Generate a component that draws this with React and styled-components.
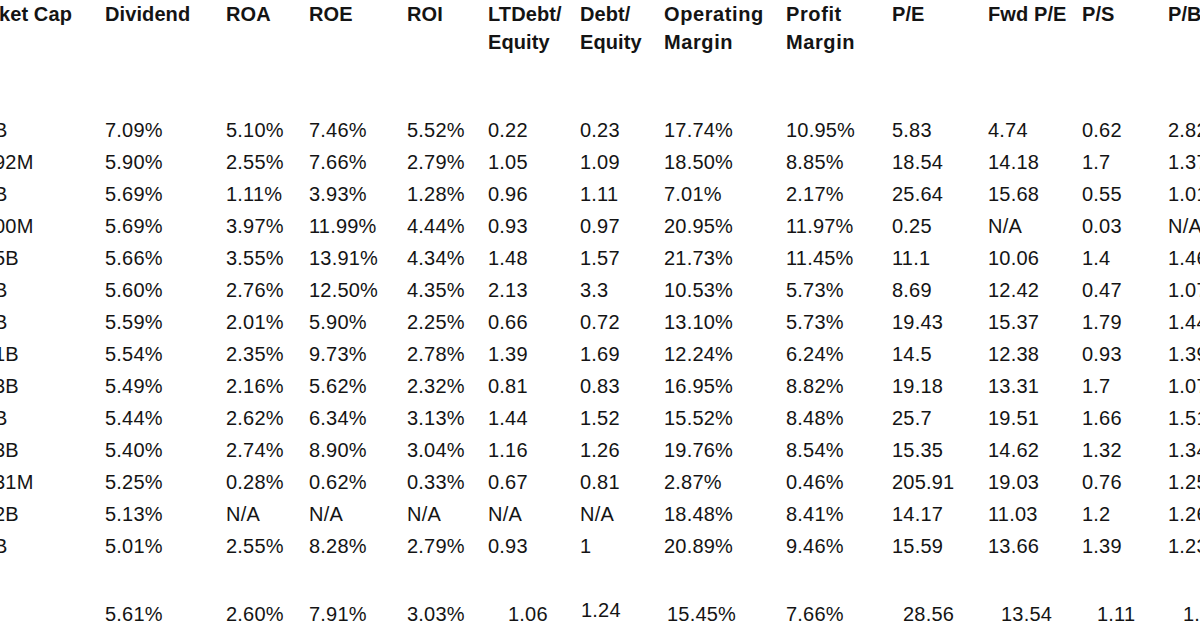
import React from "react";
import styled, { createGlobalStyle } from "styled-components";

const GlobalStyle = createGlobalStyle`
  html, body {
    margin: 0;
    padding: 0;
    background: #ffffff;
  }
  body {
    width: 1200px;
    height: 630px;
    overflow: hidden;
    font-family: "Liberation Sans", Arial, sans-serif;
    color: #141414;
  }
`;

// column starts in the sheet: 0, 105, 226, 309, 407, 488, 580, 664, 786, 892, 988, 1082, 1168
const columns = "105px 121px 83px 98px 81px 92px 84px 122px 106px 96px 94px 86px 120px";

const Sheet = styled.div`
  width: 1200px;
  height: 630px;
  overflow: hidden;
`;

const HeaderRow = styled.div`
  display: grid;
  grid-template-columns: ${columns};
  font-weight: 700;
  font-size: 20px;
  line-height: 28px;
  height: 56px;
  margin-bottom: 58px;
`;

const HeadCell = styled.div`
  white-space: nowrap;
  margin-left: ${(p) => (p.$first ? "-1px" : "0")};
  letter-spacing: ${(p) => (p.$wide ? "0.6px" : "0.1px")};
`;

const Row = styled.div`
  display: grid;
  grid-template-columns: ${columns};
  font-size: 20px;
  line-height: 32px;
  height: 32px;
  margin-top: ${(p) => (p.$gap ? "36px" : "0")};
`;

const Cell = styled.div`
  white-space: nowrap;
  letter-spacing: 0.2px;
  padding-left: ${(p) => p.$shift || 0}px;
  margin-left: ${(p) => (p.$first ? "-6px" : "0")};
  position: relative;
  top: ${(p) => (p.$raise ? "-4px" : "0")};
`;

const headers = [
  ["ket Cap"],
  ["Dividend"],
  ["ROA"],
  ["ROE"],
  ["ROI"],
  ["LTDebt/", "Equity"],
  ["Debt/", "Equity"],
  ["Operating", "Margin"],
  ["Profit", "Margin"],
  ["P/E"],
  ["Fwd P/E"],
  ["P/S"],
  ["P/B"],
];

const rows = [
  ["B", "7.09%", "5.10%", "7.46%", "5.52%", "0.22", "0.23", "17.74%", "10.95%", "5.83", "4.74", "0.62", "2.82"],
  ["92M", "5.90%", "2.55%", "7.66%", "2.79%", "1.05", "1.09", "18.50%", "8.85%", "18.54", "14.18", "1.7", "1.37"],
  ["B", "5.69%", "1.11%", "3.93%", "1.28%", "0.96", "1.11", "7.01%", "2.17%", "25.64", "15.68", "0.55", "1.01"],
  ["00M", "5.69%", "3.97%", "11.99%", "4.44%", "0.93", "0.97", "20.95%", "11.97%", "0.25", "N/A", "0.03", "N/A"],
  ["5B", "5.66%", "3.55%", "13.91%", "4.34%", "1.48", "1.57", "21.73%", "11.45%", "11.1", "10.06", "1.4", "1.46"],
  ["B", "5.60%", "2.76%", "12.50%", "4.35%", "2.13", "3.3", "10.53%", "5.73%", "8.69", "12.42", "0.47", "1.07"],
  ["B", "5.59%", "2.01%", "5.90%", "2.25%", "0.66", "0.72", "13.10%", "5.73%", "19.43", "15.37", "1.79", "1.44"],
  ["1B", "5.54%", "2.35%", "9.73%", "2.78%", "1.39", "1.69", "12.24%", "6.24%", "14.5", "12.38", "0.93", "1.39"],
  ["3B", "5.49%", "2.16%", "5.62%", "2.32%", "0.81", "0.83", "16.95%", "8.82%", "19.18", "13.31", "1.7", "1.07"],
  ["B", "5.44%", "2.62%", "6.34%", "3.13%", "1.44", "1.52", "15.52%", "8.48%", "25.7", "19.51", "1.66", "1.51"],
  ["3B", "5.40%", "2.74%", "8.90%", "3.04%", "1.16", "1.26", "19.76%", "8.54%", "15.35", "14.62", "1.32", "1.34"],
  ["31M", "5.25%", "0.28%", "0.62%", "0.33%", "0.67", "0.81", "2.87%", "0.46%", "205.91", "19.03", "0.76", "1.25"],
  ["2B", "5.13%", "N/A", "N/A", "N/A", "N/A", "N/A", "18.48%", "8.41%", "14.17", "11.03", "1.2", "1.26"],
  ["B", "5.01%", "2.55%", "8.28%", "2.79%", "0.93", "1", "20.89%", "9.46%", "15.59", "13.66", "1.39", "1.23"],
];

// averages row, a few cells sit off the column edge in the sheet
const summary = [
  { v: "" },
  { v: "5.61%" },
  { v: "2.60%" },
  { v: "7.91%" },
  { v: "3.03%" },
  { v: "1.06", shift: 20 },
  { v: "1.24", shift: 1, raise: true },
  { v: "15.45%", shift: 3 },
  { v: "7.66%" },
  { v: "28.56", shift: 11 },
  { v: "13.54", shift: 13 },
  { v: "1.11", shift: 15 },
  { v: "1.4", shift: 15 },
];

export default function App() {
  return (
    <>
      <GlobalStyle />
      <Sheet>
        <HeaderRow>
          {headers.map((lines, i) => (
            <HeadCell key={i} $first={i === 0} $wide={i === 7 || i === 8}>
              {lines.map((l) => (
                <div key={l}>{l}</div>
              ))}
            </HeadCell>
          ))}
        </HeaderRow>

        {rows.map((r, i) => (
          <Row key={i}>
            {r.map((v, j) => (
              <Cell key={j} $first={j === 0}>
                {v}
              </Cell>
            ))}
          </Row>
        ))}

        <Row $gap>
          {summary.map((c, j) => (
            <Cell key={j} $shift={c.shift} $raise={c.raise}>
              {c.v}
            </Cell>
          ))}
        </Row>
      </Sheet>
    </>
  );
}
